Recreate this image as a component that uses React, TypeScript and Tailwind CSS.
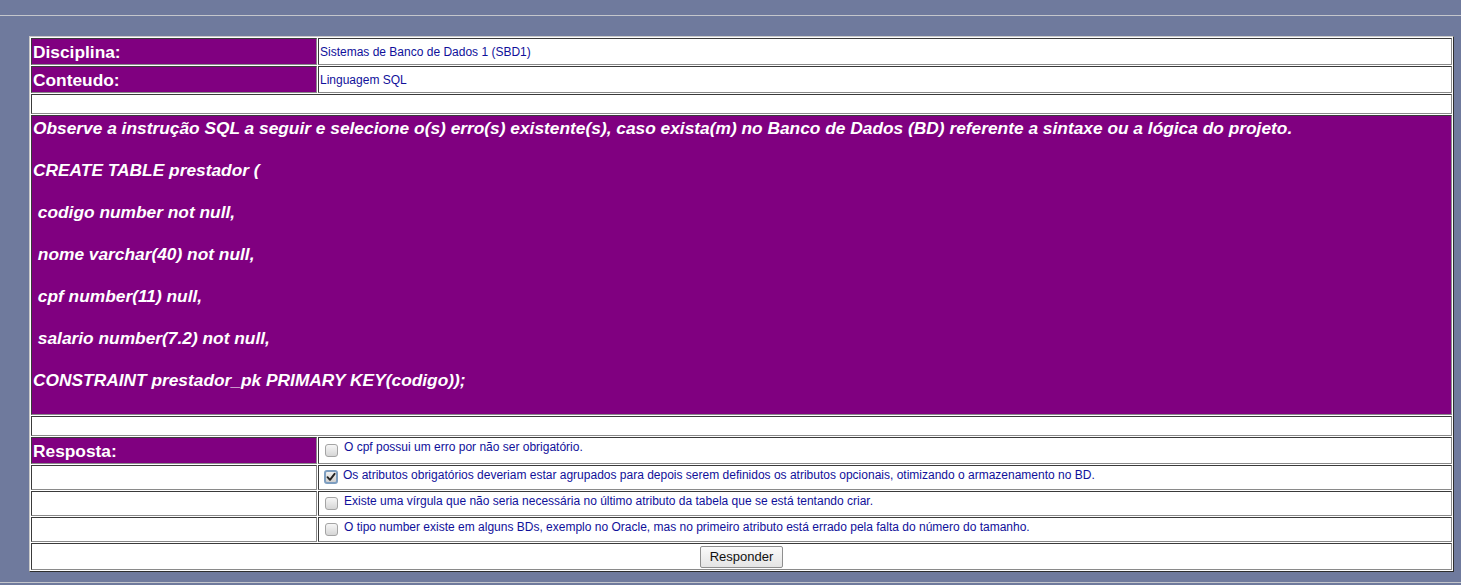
import React from "react";

const font = { fontFamily: '"Liberation Sans", Arial, sans-serif' };

function Box({ checked }: { checked?: boolean }) {
  if (checked) {
    return (
      <span className="flex h-[14px] w-[14px] shrink-0 items-center justify-center rounded-[3px] border-2 border-[#7d9ec0] bg-gradient-to-b from-[#f0f0f0] to-[#cfcfcf]">
        <svg width="10" height="10" viewBox="0 0 10 10">
          <path d="M1.5 5.2 L4 7.8 L8.6 1.8" fill="none" stroke="#222" strokeWidth="1.9" strokeLinecap="round" strokeLinejoin="round" />
        </svg>
      </span>
    );
  }
  return (
    <span className="block h-[13px] w-[13px] shrink-0 rounded-[3px] border border-[#a4a4a4] bg-gradient-to-b from-[#f6f6f6] to-[#d6d6d6]" />
  );
}

const cell = "border border-t-[#3a3a3a] border-l-[#3a3a3a] border-r-[#8a8a8a] border-b-[#8a8a8a]";

function Label({ text, h }: { text: string; h: string }) {
  return (
    <div className={`${cell} ${h} w-[286px] shrink-0 bg-[#800080] flex items-center px-px`}>
      <span className="text-[17.33px] font-bold leading-[20px] text-white">{text}</span>
    </div>
  );
}

function Empty({ h, w }: { h: string; w?: boolean }) {
  return <div className={`${cell} ${h} ${w ? "w-[286px] shrink-0" : "flex-1"} bg-white`} />;
}

function Answer({ text, checked, h, boxTop }: { text: string; checked?: boolean; h: string; boxTop: string }) {
  return (
    <div className={`${cell} ${h} flex-1 bg-white flex items-start ${checked ? "pl-[5px]" : "pl-[6px]"}`}>
      <div className={boxTop}>
        <Box checked={checked} />
      </div>
      <div className={`${checked ? "ml-[5px]" : "ml-[6px]"} mt-[2px] text-[12px] leading-[14px] text-[#10109a]`}>{text}</div>
    </div>
  );
}

export default function App() {
  const lines = [
    "Observe a instrução SQL a seguir e selecione o(s) erro(s) existente(s), caso exista(m) no Banco de Dados (BD) referente a sintaxe ou a lógica do projeto.",
    "CREATE TABLE prestador (",
    "\u00a0codigo number not null,",
    "\u00a0nome varchar(40) not null,",
    "\u00a0cpf number(11) null,",
    "\u00a0salario number(7.2) not null,",
    "CONSTRAINT prestador_pk PRIMARY KEY(codigo));",
  ];
  return (
    <div style={font} className="min-h-[585px] w-[1461px] bg-[#6f7a9d] pt-[15px]">
      <div className="h-px bg-[#c4c6cc]" />
      <div className="ml-[29px] mt-[20px] w-[1425px] border border-t-[#c8c8c8] border-l-[#c8c8c8] border-r-[#2e2e2e] border-b-[#2e2e2e] bg-white p-px flex flex-col gap-px">
        <div className="flex gap-px">
          <Label text="Disciplina:" h="h-[27px]" />
          <div className={`${cell} h-[27px] flex-1 bg-white px-px flex items-center`}>
            <span className="text-[12px] leading-[14px] text-[#10109a]">Sistemas de Banco de Dados 1 (SBD1)</span>
          </div>
        </div>
        <div className="flex gap-px">
          <Label text="Conteudo:" h="h-[27px]" />
          <div className={`${cell} h-[27px] flex-1 bg-white px-px flex items-center`}>
            <span className="text-[12px] leading-[14px] text-[#10109a]">Linguagem SQL</span>
          </div>
        </div>
        <div className="flex">
          <Empty h="h-[20px]" />
        </div>
        <div className={`${cell} h-[300px] bg-[#800080] px-px pt-px flex flex-col gap-[20px]`}>
          {lines.map((l, i) => (
            <div key={i} className="text-[17.33px] font-bold italic leading-[22px] text-white whitespace-pre">
              {l}
            </div>
          ))}
        </div>
        <div className="flex">
          <Empty h="h-[20px]" />
        </div>
        <div className="flex gap-px">
          <Label text="Resposta:" h="h-[27px]" />
          <Answer h="h-[27px]" boxTop="mt-[6px]" text="O cpf possui um erro por não ser obrigatório." />
        </div>
        <div className="flex gap-px">
          <Empty h="h-[25px]" w />
          <Answer h="h-[25px]" boxTop="mt-[4px]" checked text="Os atributos obrigatórios deveriam estar agrupados para depois serem definidos os atributos opcionais, otimizando o armazenamento no BD." />
        </div>
        <div className="flex gap-px">
          <Empty h="h-[25px]" w />
          <Answer h="h-[25px]" boxTop="mt-[5px]" text="Existe uma vírgula que não seria necessária no último atributo da tabela que se está tentando criar." />
        </div>
        <div className="flex gap-px">
          <Empty h="h-[25px]" w />
          <Answer h="h-[25px]" boxTop="mt-[5px]" text="O tipo number existe em alguns BDs, exemplo no Oracle, mas no primeiro atributo está errado pela falta do número do tamanho." />
        </div>
        <div className={`${cell} h-[27px] bg-white flex items-center justify-center`}>
          <button className="h-[22px] w-[83px] rounded-[2px] border border-[#8f8f8f] bg-gradient-to-b from-[#fafafa] to-[#e4e4e4] text-[13px] leading-[16px] text-[#111]">
            Responder
          </button>
        </div>
      </div>
      <div className="mt-[10px] h-px bg-[#c4c6cc]" />
    </div>
  );
}
